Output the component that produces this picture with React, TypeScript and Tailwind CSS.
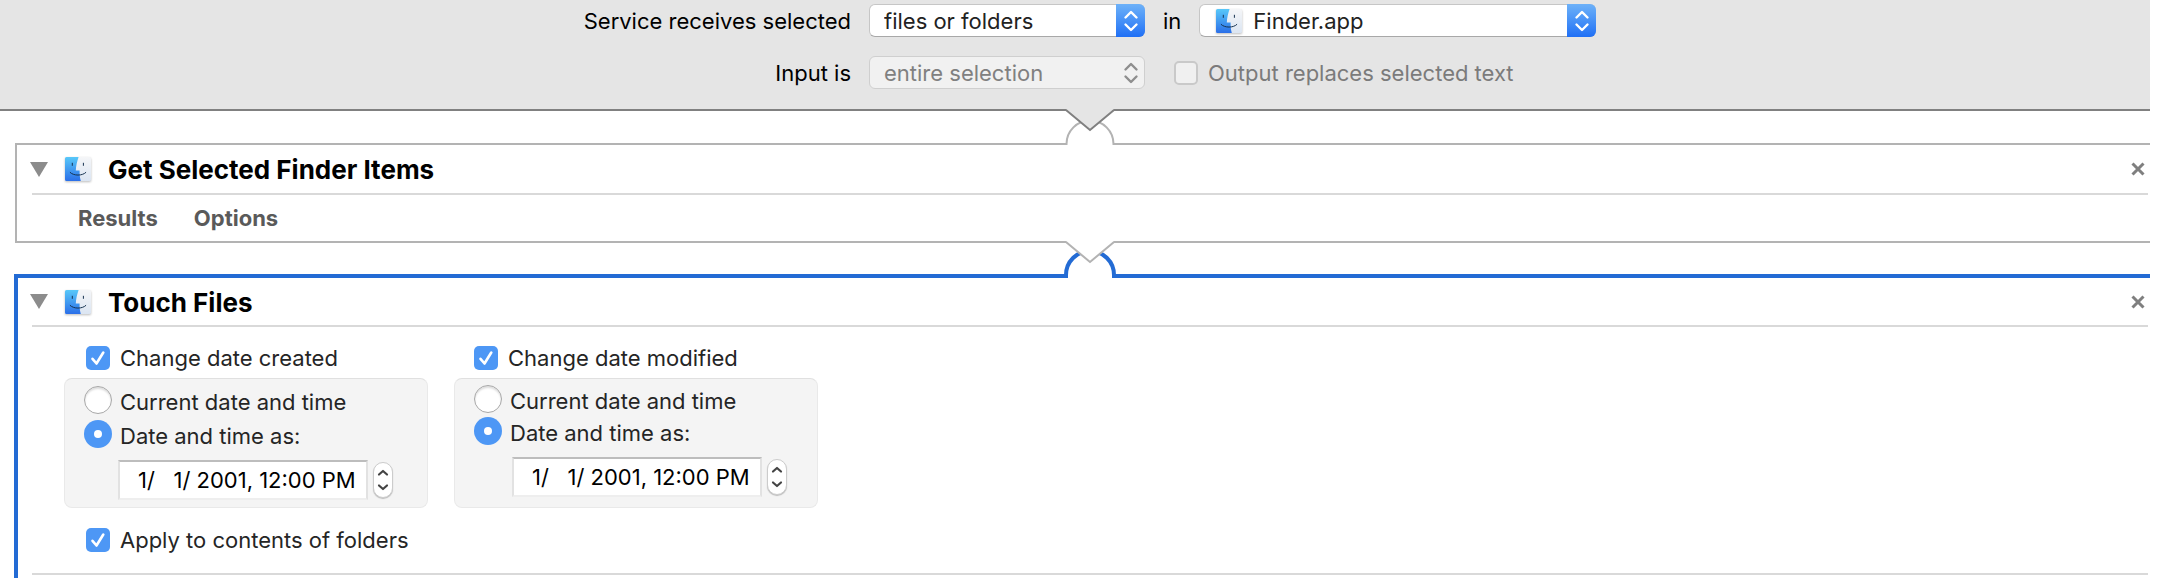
import { useId, useState } from "react";
import type { ReactNode } from "react";

function FinderIcon({ className }: { className: string }) {
  const id = useId();
  return (
    <svg viewBox="0 0 26 24" preserveAspectRatio="none" className={className} aria-hidden="true">
      <defs>
        <linearGradient id={id + "b"} x1="0" y1="0" x2="0" y2="1">
          <stop offset="0" stopColor="#58c8f9" />
          <stop offset="1" stopColor="#2b6fe8" />
        </linearGradient>
        <linearGradient id={id + "w"} x1="0" y1="0" x2="0" y2="1">
          <stop offset="0" stopColor="#f5f6f8" />
          <stop offset="1" stopColor="#dbe5f2" />
        </linearGradient>
      </defs>
      <rect x="0" y="0" width="26" height="24" rx="1.5" fill={`url(#${id}w)`} />
      <path
        d="M1.5 0H13.6C12 4.5 11 9 10.8 13.6H14.6C14.5 17 14.8 20.5 15.8 24H1.5Q0 24 0 22.5V1.5Q0 0 1.5 0Z"
        fill={`url(#${id}b)`}
      />
      <path d="M7.3 6.2V8.4M18.4 6.2V8.4" stroke="#16324f" strokeWidth="1" strokeLinecap="round" />
      <path d="M5.2 15.5C8.5 19 17.5 19 20.8 15.5" fill="none" stroke="#16324f" strokeWidth="1" strokeLinecap="round" />
    </svg>
  );
}

function PopUp({
  id,
  label,
  value,
  disabled,
  icon,
}: {
  id: string;
  label?: string;
  value: string;
  disabled?: boolean;
  icon?: ReactNode;
}) {
  return (
    <div className="relative flex h-[33px] w-full">
      <select
        id={id}
        aria-label={label}
        disabled={disabled}
        className={`h-full w-full appearance-none rounded-md border pr-8 text-[22px] leading-7 opacity-100 ${
          icon ? "pl-[53px]" : "pl-3.5"
        } ${
          disabled
            ? "border-[#cfcfcf] bg-[#f1f1f1] text-[#808080]"
            : "border-[#c6c6c6] border-b-[#a8a8a8] bg-white text-[#222222]"
        }`}
      >
        <option>{value}</option>
      </select>
      {icon}
      <span
        className={`pointer-events-none absolute inset-y-0 right-0 flex w-[29px] items-center justify-center rounded-r-md ${
          disabled ? "text-[#8e8e8e]" : "bg-linear-to-b from-[#6db1f8] to-[#1f6ff5] text-white"
        }`}
      >
        <svg viewBox="0 0 16 22" className="h-[22px] w-4" fill="none" aria-hidden="true">
          <path
            d="M2.5 7.5L8 2L13.5 7.5M2.5 14.5L8 20L13.5 14.5"
            stroke="currentColor"
            strokeWidth="2.4"
            strokeLinecap="round"
            strokeLinejoin="round"
          />
        </svg>
      </span>
    </div>
  );
}

/* Joins two stacked panels: the notch of the upper one over the socket of the lower one. */
function Connector({ selected }: { selected?: boolean }) {
  return (
    <svg
      viewBox="0 0 60 40"
      className={`relative z-10 mx-auto -mt-1 block h-10 w-[60px] shrink-0 ${selected ? "-mb-[5px]" : "-mb-1"}`}
      aria-hidden="true"
    >
      {selected ? (
        <path d="M6 39V36A24 24 0 0 1 54 36V39" fill="#ffffff" stroke="#236bd4" strokeWidth="4" />
      ) : (
        <path d="M6.5 38V37A23.5 23.5 0 0 1 53.5 37V38" fill="#ffffff" stroke="#b3b3b3" strokeWidth="2" />
      )}
      <path d="M6.5 0V3L30 23L53.5 3V0Z" fill={selected ? "#ffffff" : "#e5e5e5"} />
      <path d="M6 3L30 23L54 3" fill="none" stroke={selected ? "#b3b3b3" : "#808080"} strokeWidth="2" />
    </svg>
  );
}

function CheckBox({ label, checked = false, disabled = false }: { label: string; checked?: boolean; disabled?: boolean }) {
  const [on, setOn] = useState(checked);
  return (
    <label className={`flex items-center gap-2.5 whitespace-nowrap ${disabled ? "text-[#7b7b7b]" : "text-[#252525]"}`}>
      <span className="relative flex size-6 shrink-0 items-center justify-center">
        <input
          type="checkbox"
          checked={on}
          disabled={disabled}
          onChange={(e) => setOn(e.target.checked)}
          className={`size-full appearance-none rounded-[5px] ${
            on ? "bg-[#4d97f5]" : "border-2 border-[#c9c9c9] bg-[#f0f0f0]"
          }`}
        />
        {on && (
          <svg viewBox="0 0 24 24" className="pointer-events-none absolute inset-0" fill="none" aria-hidden="true">
            <path
              d="M6.5 12.8L10.5 17.5L17.3 6.5"
              stroke="#ffffff"
              strokeWidth="2.6"
              strokeLinecap="round"
              strokeLinejoin="round"
            />
          </svg>
        )}
      </span>
      {label}
    </label>
  );
}

function Radio({ name, label, checked, onSelect }: { name: string; label: string; checked: boolean; onSelect: () => void }) {
  return (
    <label className="flex h-7 items-start gap-2 whitespace-nowrap text-[#252525]">
      <span className="relative flex size-7 shrink-0 items-center justify-center">
        <input
          type="radio"
          name={name}
          checked={checked}
          onChange={onSelect}
          className={`size-full appearance-none rounded-full ${
            checked ? "bg-[#4d97f5]" : "border border-[#a8a8a8] bg-white shadow-[inset_0_2px_2px_#dddddd]"
          }`}
        />
        {checked && <span className="pointer-events-none absolute size-2 rounded-full bg-white" />}
      </span>
      <span className="pt-0.5 leading-7">{label}</span>
    </label>
  );
}

function DateGroup({ title, name, dense }: { title: string; name: string; dense?: boolean }) {
  const [mode, setMode] = useState("custom");
  return (
    <section className="w-[364px]">
      <div className={dense ? "pl-5" : "pl-[22px]"}>
        <CheckBox label={title} checked />
      </div>
      <div
        className={`mt-2 h-[130px] rounded-lg border border-[#e9e9e9] border-t-[#e0e0e0] bg-[#f4f4f4] pl-[19px] ${
          dense ? "pt-1.5" : "pt-[7px]"
        }`}
      >
        <div className={`flex flex-col ${dense ? "gap-1" : "gap-1.5"}`}>
          <Radio name={name} label="Current date and time" checked={mode === "now"} onSelect={() => setMode("now")} />
          <Radio name={name} label="Date and time as:" checked={mode === "custom"} onSelect={() => setMode("custom")} />
        </div>
        <div className={`mt-3 flex items-center gap-[5px] ${dense ? "pl-[38px]" : "pl-[34px]"}`}>
          <input
            type="text"
            aria-label={title}
            defaultValue={"1/\u00a0\u00a0 1/ 2001, 12:00 PM"}
            className="h-10 w-[250px] border-2 border-[#e2e2e2] border-t-[#bdbdbd] border-b-[#eeeeee] bg-white pl-[18px] text-[22px] text-black"
          />
          <button
            type="button"
            aria-label={`Step ${title}`}
            className="flex h-9 w-5 items-center justify-center rounded-full border border-[#cccccc] bg-white text-[#444444] shadow-[0_1px_1px_#bbbbbb]"
          >
            <svg viewBox="0 0 12 24" className="h-6 w-3" fill="none" aria-hidden="true">
              <path
                d="M2 6.5L6 3L10 6.5M2 17.5L6 21L10 17.5"
                stroke="currentColor"
                strokeWidth="2.2"
                strokeLinecap="round"
                strokeLinejoin="round"
              />
            </svg>
          </button>
        </div>
      </div>
    </section>
  );
}

function ActionHeader({ title, selected }: { title: string; selected?: boolean }) {
  return (
    <header className={`flex items-center border-b-2 border-[#d9d9d9] pr-[3px] ${selected ? "h-[49px]" : "h-[50px]"}`}>
      <button type="button" aria-label={`Collapse ${title}`} className="-ml-0.5 flex w-[18px]">
        <svg viewBox="0 0 18 15" className="h-[15px] w-[18px]" aria-hidden="true">
          <path d="M0 0H18L9 15Z" fill="#8c8c8c" />
        </svg>
      </button>
      <FinderIcon className="ml-[17px] h-6 w-[26px] drop-shadow-[0_1px_1px_#bbbbbb]" />
      <h2 className="ml-[17px] pt-0.5 text-[26px] leading-8 font-bold text-black">{title}</h2>
      <button type="button" aria-label={`Remove ${title}`} className="ml-auto">
        <svg viewBox="0 0 14 14" className="size-3.5" aria-hidden="true">
          <path d="M1.5 1.5L12.5 12.5M12.5 1.5L1.5 12.5" stroke="#7f7f7f" strokeWidth="3" />
        </svg>
      </button>
    </header>
  );
}

export default function App() {
  return (
    <div className="flex min-h-screen flex-col bg-white font-[Inter,'Liberation_Sans',sans-serif] text-[22px] leading-6 text-black">
      <div className="mr-[30px] border-b-2 border-[#808080] bg-[#e5e5e5] pt-1 pb-5 pl-[30px]">
        <div className="grid grid-cols-[267px_276px_433px] items-center justify-center gap-x-[18px] gap-y-[19px] whitespace-nowrap">
          <label htmlFor="receives" className="justify-self-end">
            Service receives selected
          </label>
          <PopUp id="receives" value="files or folders" />
          <div className="flex items-center gap-[18px]">
            <label htmlFor="app">in</label>
            <PopUp
              id="app"
              value="Finder.app"
              icon={
                <FinderIcon className="pointer-events-none absolute top-[5px] left-[17px] h-6 w-[26px] drop-shadow-[0_1px_1px_#bbbbbb]" />
              }
            />
          </div>
          <label htmlFor="input" className="justify-self-end">
            Input is
          </label>
          <PopUp id="input" value="entire selection" disabled />
          <div className="pl-[11px]">
            <CheckBox label="Output replaces selected text" disabled />
          </div>
        </div>
      </div>

      <Connector />

      <section className="mr-[30px] ml-[15px] h-[100px] border-y-2 border-l-2 border-[#b3b3b3] pr-0.5 pl-[15px]">
        <ActionHeader title="Get Selected Finder Items" />
        <div className="flex gap-9 pt-[11px] pl-[46px] font-bold text-[#5a5a5a]">
          <button type="button">Results</button>
          <button type="button">Options</button>
        </div>
      </section>

      <Connector selected />

      <section className="mr-[30px] ml-3.5 grow border-t-4 border-l-4 border-[#236bd4] pr-0.5 pl-3.5">
        <ActionHeader title="Touch Files" selected />
        <div className="border-b-2 border-[#d9d9d9] pt-[19px] pb-[21px]">
          <div className="flex gap-[26px] pl-8">
            <DateGroup title="Change date created" name="created" />
            <DateGroup title="Change date modified" name="modified" dense />
          </div>
          <div className="mt-5 pl-[54px]">
            <CheckBox label="Apply to contents of folders" checked />
          </div>
        </div>
      </section>
    </div>
  );
}
